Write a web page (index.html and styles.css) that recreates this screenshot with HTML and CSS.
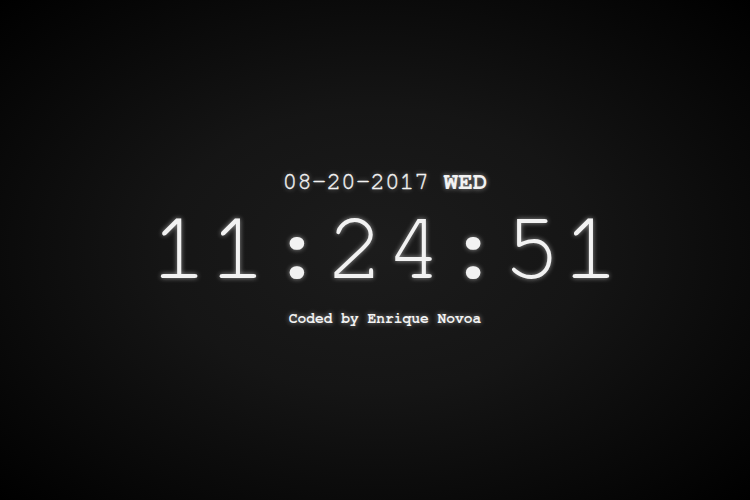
FILE: index.html
```html
<!DOCTYPE html>
<html>
<head>
<meta charset="utf-8">
<link rel="stylesheet" href="styles.css">
</head>
<body>
<main class="screen">
  <div class="clock">
    <p class="date">08-20-2017 <span class="day">WED</span></p>
    <p class="time">11:24:51</p>
    <p class="credit">Coded by Enrique Novoa</p>
  </div>
</main>
</body>
</html>
```
FILE: styles.css
```css
html, body {
  margin: 0;
  padding: 0;
  height: 100%;
}
body {
  background: #000;
  font-family: "FreeMono", "Liberation Mono", "Courier New", monospace;
  color: #f2f2f2;
}
.screen {
  box-sizing: border-box;
  width: 750px;
  height: 500px;
  padding: 0 0 6px 20px;
  display: flex;
  align-items: center;
  justify-content: center;
  background: radial-gradient(ellipse at center, #1c1c1c 0%, #151515 40%, #000 100%);
}
.clock {
  display: flex;
  flex-direction: column;
  align-items: center;
  text-shadow: 0 0 5px rgba(255,255,255,0.55);
}
.clock p {
  margin: 0;
}
.date {
  font-size: 24.4px;
  line-height: 28px;
  padding-top: 2px;
  -webkit-text-stroke: 0.4px #f2f2f2;
}
.day {
  font-weight: bold;
  -webkit-text-stroke: 0;
}
.time {
  font-size: 98px;
  line-height: 98px;
  margin-top: 4px !important;
}
.credit {
  font-size: 14.6px;
  font-weight: bold;
  line-height: 18px;
  margin-top: 12px !important;
}
```
